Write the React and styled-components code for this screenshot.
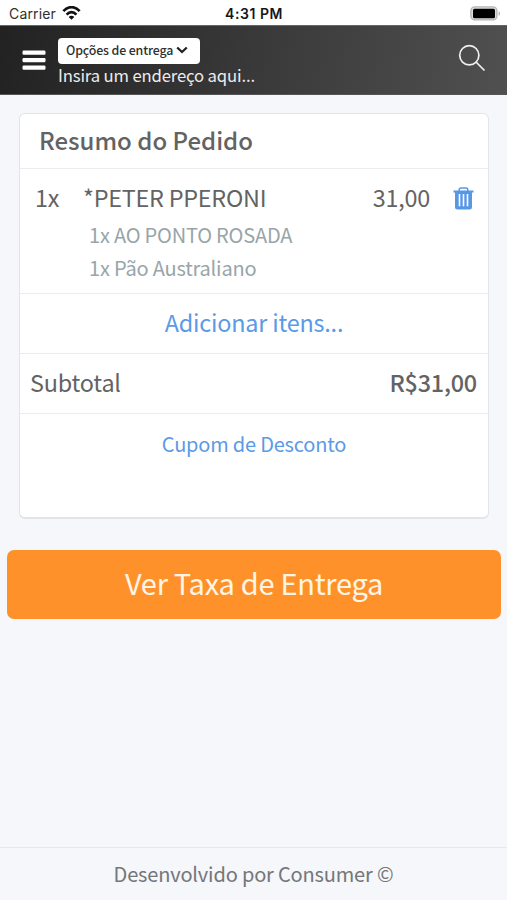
import React from 'react';
import styled, { createGlobalStyle } from 'styled-components';

const GlobalStyle = createGlobalStyle`
  * {
    box-sizing: border-box;
  }

  body {
    margin: 0;
    background-color: #f5f7fb;
    font-family: "Noto Sans CJK SC", "Noto Sans", sans-serif;
    color: #636363;
  }

  button {
    margin: 0;
    padding: 0;
    border: 0;
    background: none;
    font-family: inherit;
  }
`;

const Page = styled.div`
  display: flex;
  flex-direction: column;
  height: 900px;
`;

const StatusBar = styled.div`
  display: grid;
  grid-template-columns: 1fr auto 1fr;
  align-items: center;
  height: 25px;
  padding: 2px 8px 0 9px;
  background-color: #fff;
  color: #161616;
  font-family: Inter, "Liberation Sans", sans-serif;
`;

const Carrier = styled.div`
  display: flex;
  align-items: center;
  gap: 6px;
  color: #303030;
  font-size: 14px;
  letter-spacing: 0.15px;
`;

const WifiIcon = styled.svg`
  margin-bottom: 2px;
`;

const Clock = styled.span`
  font-weight: 600;
  font-size: 14px;
  letter-spacing: 0.55px;
`;

const BatteryIcon = styled.svg`
  justify-self: end;
  margin: 0 -2px 1px 0;
`;

const Header = styled.header`
  display: flex;
  align-items: center;
  height: 70px;
  padding: 0 21px 0 22px;
  border-top: 1px solid #666;
  border-bottom: 1px solid #555;
  background: linear-gradient(100deg, #222 0%, #505050 100%);
`;

const IconButton = styled.button`
  display: flex;
  color: ${props => props.$color || '#fff'};
`;

const SearchButton = styled(IconButton)`
  margin-bottom: 4px;
`;

const Delivery = styled.div`
  display: flex;
  flex-direction: column;
  align-items: flex-start;
  flex: 1;
  padding-top: 4px;
  margin-left: 12px;
`;

const DeliveryOptions = styled.button`
  display: flex;
  align-items: center;
  gap: 3px;
  width: 142px;
  height: 26px;
  padding: 0 0 1px 8px;
  border-radius: 4px;
  background-color: #fff;
  color: #303030;
  font-size: 12.4px;
  font-weight: 500;
  letter-spacing: -0.15px;
`;

const Address = styled.span`
  font-size: 16.7px;
  line-height: 23px;
  letter-spacing: -0.15px;
  color: #ececec;
`;

const Card = styled.section`
  height: 406px;
  margin: 18px 18px 0 19px;
  border: 1px solid #e1e4e8;
  border-bottom: 2px solid #e1e4e8;
  border-radius: 6px;
  background-color: #fff;
`;

const CardTitle = styled.h1`
  margin: 0;
  padding-left: 19px;
  height: 55px;
  border-bottom: 1px solid #ececee;
  font-size: 24px;
  font-weight: 500;
  line-height: 52px;
`;

const Item = styled.div`
  height: 125px;
  padding: 11px 14px 0 15px;
  border-bottom: 1px solid #ececee;
`;

const ItemRow = styled.div`
  display: flex;
  align-items: center;
  height: 36px;
  margin-bottom: 2px;
  font-size: 23.4px;
  line-height: 34px;
  letter-spacing: -0.25px;
`;

const Quantity = styled.span`
  width: 48px;
  padding-bottom: 2px;
`;

const ItemName = styled.span`
  flex: 1;
  padding-bottom: 2px;
`;

const Price = styled.span`
  margin-right: 23px;
  padding-bottom: 2px;
`;

const Extra = styled.div`
  padding-left: 54px;
  font-size: 20px;
  line-height: 33px;
  letter-spacing: -0.2px;
  color: #98a5a9;
`;

const LinkRow = styled.button`
  display: block;
  width: 100%;
  height: 60px;
  border-bottom: ${props => (props.$last ? 'none' : '1px solid #ececee')};
  padding-bottom: 2px;
  color: #5b9ae6;
  font-size: ${props => (props.$last ? '20px' : '23.4px')};
  line-height: 57px;
  letter-spacing: -0.2px;
  text-align: center;
`;

const TotalRow = styled.div`
  display: flex;
  justify-content: space-between;
  height: 60px;
  padding: 0 11px 0 10px;
  border-bottom: 1px solid #ececee;
  font-size: 23.4px;
  line-height: 57px;
  letter-spacing: -0.2px;
`;

const Total = styled.span`
  font-weight: 500;
`;

const SubmitButton = styled.button`
  flex-shrink: 0;
  height: 69px;
  margin: 31px 6px 0 7px;
  padding-bottom: 5px;
  border-radius: 7px;
  background-color: #ff912b;
  color: #fff5e6;
  font-size: 29px;
  letter-spacing: -0.28px;
`;

const Footer = styled.footer`
  height: 53px;
  margin-top: auto;
  border-top: 1px solid #e6e8eb;
  color: #747678;
  font-size: 20px;
  line-height: 52px;
  letter-spacing: -0.17px;
  text-align: center;
`;

const extras = ['1x AO PONTO ROSADA', '1x Pão Australiano'];

function App() {
  return (
    <>
      <GlobalStyle />
      <Page>
        <StatusBar>
          <Carrier>
            <span>Carrier</span>
            <WifiIcon width="19" height="14" viewBox="0 0 19 14" fill="none" stroke="#111" strokeWidth="2.7">
              <path d="M1.4 5.2C6-.2 13-.2 17.6 5.2" />
              <path d="M4.6 8.6c3-3.2 6.8-3.2 9.8 0" />
              <path d="M9.5 13.7 6.7 11c1.6-1.600 4-1.600 5.600 0Z" fill="#111" stroke="none" />
            </WifiIcon>
          </Carrier>
          <Clock>4:31 PM</Clock>
          <BatteryIcon width="31" height="15" viewBox="0 0 31 15">
            <rect x="0.9" y="0.9" width="26" height="13" rx="4" fill="#ddd" stroke="#b5b5b5" strokeWidth="1.4" />
            <rect x="3" y="2.8" width="22" height="9.4" rx="1.5" fill="#000" />
            <path d="M28.6 5.2c2 .8 2 3.8 0 4.6Z" fill="#b5b5b5" />
          </BatteryIcon>
        </StatusBar>

        <Header>
          <IconButton aria-label="Menu">
            <svg width="24" height="20" viewBox="0 0 24 20" fill="currentColor">
              <rect x="0.5" y="0.5" width="23" height="4.2" rx="1.2" />
              <rect x="0.5" y="8" width="23" height="4.2" rx="1.2" />
              <rect x="0.5" y="15.5" width="23" height="4.2" rx="1.2" />
            </svg>
          </IconButton>
          <Delivery>
            <DeliveryOptions>
              Opções de entrega
              <svg width="12" height="8" viewBox="0 0 12 8" fill="none" stroke="#222" strokeWidth="2.3">
                <path d="m1.2 1.5 4.8 4.5 4.8-4.5" />
              </svg>
            </DeliveryOptions>
            <Address>Insira um endereço aqui...</Address>
          </Delivery>
          <SearchButton aria-label="Buscar" $color="#f0f0f0">
            <svg width="28" height="28" viewBox="0 0 28 28" fill="none" stroke="currentColor" strokeWidth="1.7">
              <circle cx="11.3" cy="11.3" r="9.6" />
              <path d="m18 18 8.5 8.5" />
            </svg>
          </SearchButton>
        </Header>

        <Card>
          <CardTitle>Resumo do Pedido</CardTitle>
          <Item>
            <ItemRow>
              <Quantity>1x</Quantity>
              <ItemName>*PETER PPERONI</ItemName>
              <Price>31,00</Price>
              <IconButton aria-label="Remover" $color="#5698e5">
                <svg width="21" height="23" viewBox="0 0 21 23">
                  <path d="M6.2 4V2.8Q6.2 1 8 1h5q1.8 0 1.8 1.800V4" fill="none" stroke="currentColor" strokeWidth="1.5" />
                  <path d="M.5 3.4h20v2H.5zM2 5.4h17V20q0 2.500-2.500 2.500h-12Q2 22.500 2 20z" fill="currentColor" />
                  <path d="M6.5 7v12.300M10.500 7v12.300M14.500 7v12.300" stroke="#fff" strokeWidth="1.6" />
                </svg>
              </IconButton>
            </ItemRow>
            {extras.map(extra => (
              <Extra key={extra}>{extra}</Extra>
            ))}
          </Item>
          <LinkRow>Adicionar itens...</LinkRow>
          <TotalRow>
            <span>Subtotal</span>
            <Total>R$31,00</Total>
          </TotalRow>
          <LinkRow $last>Cupom de Desconto</LinkRow>
        </Card>

        <SubmitButton>Ver Taxa de Entrega</SubmitButton>
        <Footer>Desenvolvido por Consumer ©</Footer>
      </Page>
    </>
  );
}

export default App;
